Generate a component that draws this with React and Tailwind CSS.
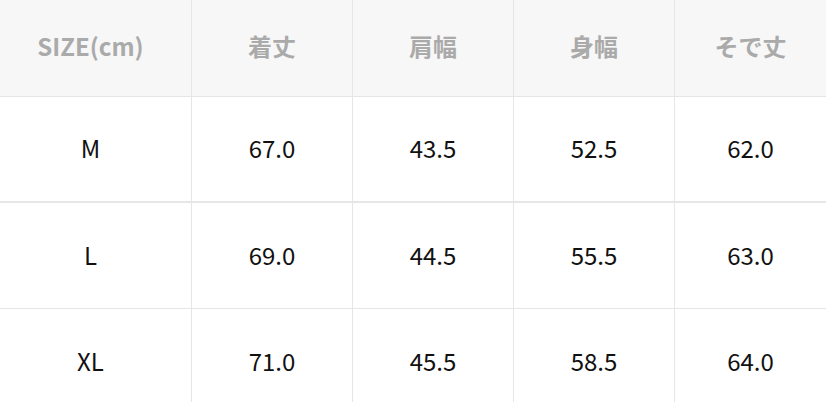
const headers = ['SIZE(cm)', '着丈', '肩幅', '身幅', 'そで丈'];

const rows = [
  { size: 'M', values: ['67.0', '43.5', '52.5', '62.0'], border: 'border-b-2' },
  { size: 'L', values: ['69.0', '44.5', '55.5', '63.0'], border: 'border-b' },
  { size: 'XL', values: ['71.0', '45.5', '58.5', '64.0'], border: '' },
];

const cols = 'grid grid-cols-[191px_161px_161px_161px_152px]';

export default function App() {
  return (
    <div
      className="h-[402px] w-[826px] overflow-hidden bg-white"
      style={{ fontFamily: '"Noto Sans CJK JP", "Noto Sans", sans-serif' }}
    >
      <div className={`${cols} h-[97px] border-b border-[#e6e6e6] bg-[#f7f7f7]`}>
        {headers.map((label, i) => (
          <div
            key={label}
            className={`flex items-center justify-center pb-[4px] text-[24px] font-bold text-[#aaaaaa] ${i > 0 ? 'border-l border-[#e6e6e6]' : 'pr-[10px]'}`}
          >
            {label}
          </div>
        ))}
      </div>
      {rows.map((row) => (
        <div key={row.size} className={`${cols} h-[106px] ${row.border} border-[#e6e6e6]`}>
          {[row.size, ...row.values].map((v, i) => (
            <div
              key={i}
              className={`flex items-center justify-center pb-[2px] text-[24px] text-[#111111] ${i > 0 ? 'border-l border-[#e6e6e6]' : 'pr-[10px]'}`}
            >
              {v}
            </div>
          ))}
        </div>
      ))}
    </div>
  );
}
